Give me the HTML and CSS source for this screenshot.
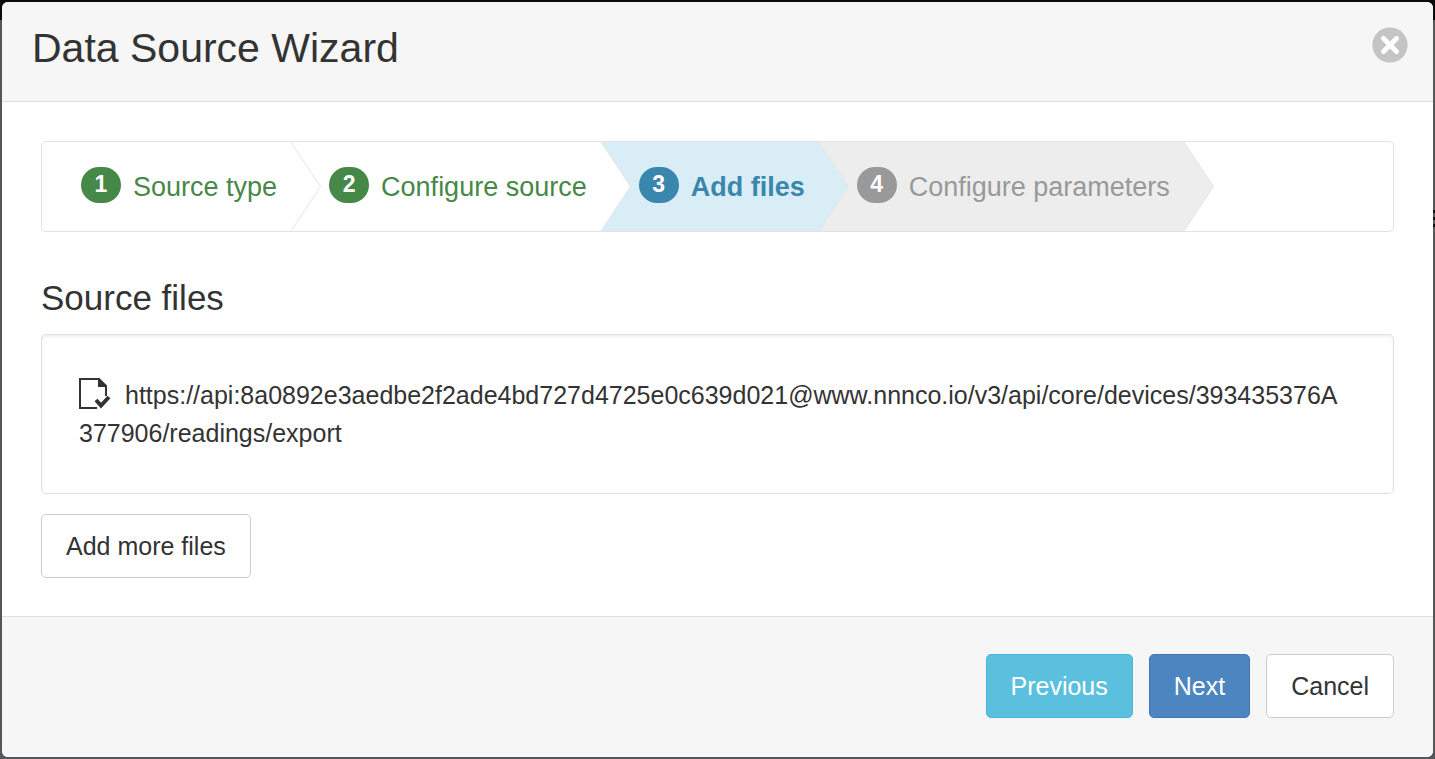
FILE: index.html
```html
<!DOCTYPE html>
<html lang="en">
<head>
<meta charset="utf-8">
<meta name="viewport" content="width=device-width, initial-scale=1">
<title>Data Source Wizard</title>
<link rel="stylesheet" href="styles.css">
</head>
<body>
<div class="modal" role="dialog" aria-labelledby="wizard-title">
  <header class="modal-header">
    <h1 class="modal-title" id="wizard-title">Data Source Wizard</h1>
    <button class="close" type="button" aria-label="Close">
      <svg viewBox="0 0 36 36" width="36" height="36" aria-hidden="true">
        <circle cx="18" cy="18" r="17.6" fill="#c4c4c4"/>
        <path d="M11.5 11.5 24.5 24.5M24.5 11.5 11.5 24.5" stroke="#fff" stroke-width="5" stroke-linecap="round"/>
      </svg>
    </button>
  </header>

  <main class="modal-body">
    <ol class="steps">
      <li class="step complete">
        <span class="badge">1</span><span>Source type</span>
        <svg class="chevron" viewBox="0 0 30 89" aria-hidden="true"><path d="M0 0 29.5 44.5 0 89"/></svg>
      </li>
      <li class="step complete">
        <span class="badge">2</span><span>Configure source</span>
        <svg class="chevron" viewBox="0 0 30 89" aria-hidden="true"><path d="M0 0 29.5 44.5 0 89"/></svg>
      </li>
      <li class="step active" aria-current="step">
        <span class="badge">3</span><span>Add files</span>
        <svg class="chevron" viewBox="0 0 30 89" aria-hidden="true"><path d="M0 0 29.5 44.5 0 89"/></svg>
      </li>
      <li class="step pending">
        <span class="badge">4</span><span>Configure parameters</span>
        <svg class="chevron" viewBox="0 0 30 89" aria-hidden="true"><path d="M0 0 29.5 44.5 0 89"/></svg>
      </li>
    </ol>

    <h2 class="section-title">Source files</h2>
    <ul class="well">
      <li class="file"><svg class="file-icon" viewBox="0 0 32 32" width="32" height="32" aria-hidden="true"><path d="M18 30H1V1H20L27 8V18" fill="none" stroke="#333" stroke-width="2"/><path d="M19 0 28 9H19Z" fill="#333"/><path d="M17 22 22 27.5 30 19" fill="none" stroke="#333" stroke-width="4"/></svg>https://api:8a0892e3aedbe2f2ade4bd727d4725e0c639d021@www.nnnco.io/v3/api/core/devices/393435376A377906/readings/export</li>
    </ul>
    <button class="btn" type="button">Add more files</button>
  </main>

  <footer class="modal-footer">
    <button class="btn btn-info" type="button">Previous</button>
    <button class="btn btn-primary" type="button">Next</button>
    <button class="btn" type="button">Cancel</button>
  </footer>
</div>
</body>
</html>
```

FILE: styles.css
```css
* {
  box-sizing: border-box;
}

body {
  margin: 0;
  padding: 2px;
  min-height: 100vh;
  display: flex;
  background:
    repeating-linear-gradient(#111 0 3px, #555658 3px 7px) right 210px / 2px 18px no-repeat,
    linear-gradient(#0c0c0c 20px, #555658 20px);
  background-color: #555658;
  font-family: "Liberation Sans", Arial, sans-serif;
  font-size: 25px;
  line-height: 38px;
  color: #333;
}

.modal {
  flex: 1;
  min-width: 0;
  display: flex;
  flex-direction: column;
  background: #fff;
  border-radius: 6px;
  overflow: hidden;
}

.modal-header {
  display: flex;
  justify-content: space-between;
  align-items: center;
  padding: 24px 25px 31px 30px;
  background: #f6f6f6;
  border-bottom: 1px solid #e0e0e0;
}

.modal-title {
  margin: 0;
  font-size: 41px;
  line-height: 44px;
  font-weight: 400;
}

.close {
  display: flex;
  padding: 0;
  margin-bottom: 6px;
  border: 0;
  background: none;
  cursor: pointer;
}

.modal-body {
  flex: 1;
  padding: 39px 39px 38px;
}

.steps {
  display: flex;
  margin: 0;
  padding: 0 0 0 1px;
  list-style: none;
  border: 1px solid #e2e2e2;
  border-radius: 5px;
  font-size: 27px;
}

.step {
  position: relative;
  display: flex;
  align-items: center;
  gap: 12px;
  height: 89px;
  padding: 0 14px 0 38px;
  white-space: nowrap;
}

.badge {
  width: 40px;
  height: 36px;
  margin-bottom: 4px;
  border-radius: 18px;
  color: #fff;
  font-size: 23px;
  line-height: 34px;
  font-weight: 700;
  text-align: center;
}

.chevron {
  position: absolute;
  z-index: 1;
  top: 0;
  left: 100%;
  width: 30px;
  height: 89px;
  fill: #fff;
  stroke: #e4e4e4;
  stroke-width: 1;
}

.complete {
  color: #468847;
}

.complete .badge {
  background: #468847;
}

.active {
  background: #d9edf7;
  color: #3a87ad;
  font-weight: 700;
}

.active .badge {
  background: #3a87ad;
}

.active .chevron {
  fill: #d9edf7;
}

.pending {
  background: #ededed;
  color: #999;
}

.pending .badge {
  background: #999;
}

.pending .chevron {
  fill: #ededed;
}

.section-title {
  margin: 46px 0 16px;
  font-size: 35px;
  line-height: 40px;
  font-weight: 400;
}

.well {
  margin: 0 0 20px;
  padding: 41px 46px 41px 37px;
  list-style: none;
  border: 1px solid #e0e0e0;
  border-radius: 5px;
  box-shadow: inset 0 2px 3px rgba(0, 0, 0, 0.06);
}

.file {
  word-break: break-all;
}

.file-icon {
  margin-right: 14px;
  vertical-align: -6px;
}

.btn {
  height: 64px;
  padding: 0 24px;
  border: 1px solid #ccc;
  border-radius: 5px;
  background: #fff;
  color: #333;
  font: inherit;
  cursor: pointer;
}

.btn-info {
  background: #5bc0de;
  border-color: #46b8da;
  color: #fff;
}

.btn-primary {
  background: #4c85c0;
  border-color: #3f78b5;
  color: #fff;
}

.modal-footer {
  display: flex;
  justify-content: flex-end;
  gap: 16px;
  padding: 37px 39px 39px;
  background: #f6f6f6;
  border-top: 1px solid #e0e0e0;
}
```
